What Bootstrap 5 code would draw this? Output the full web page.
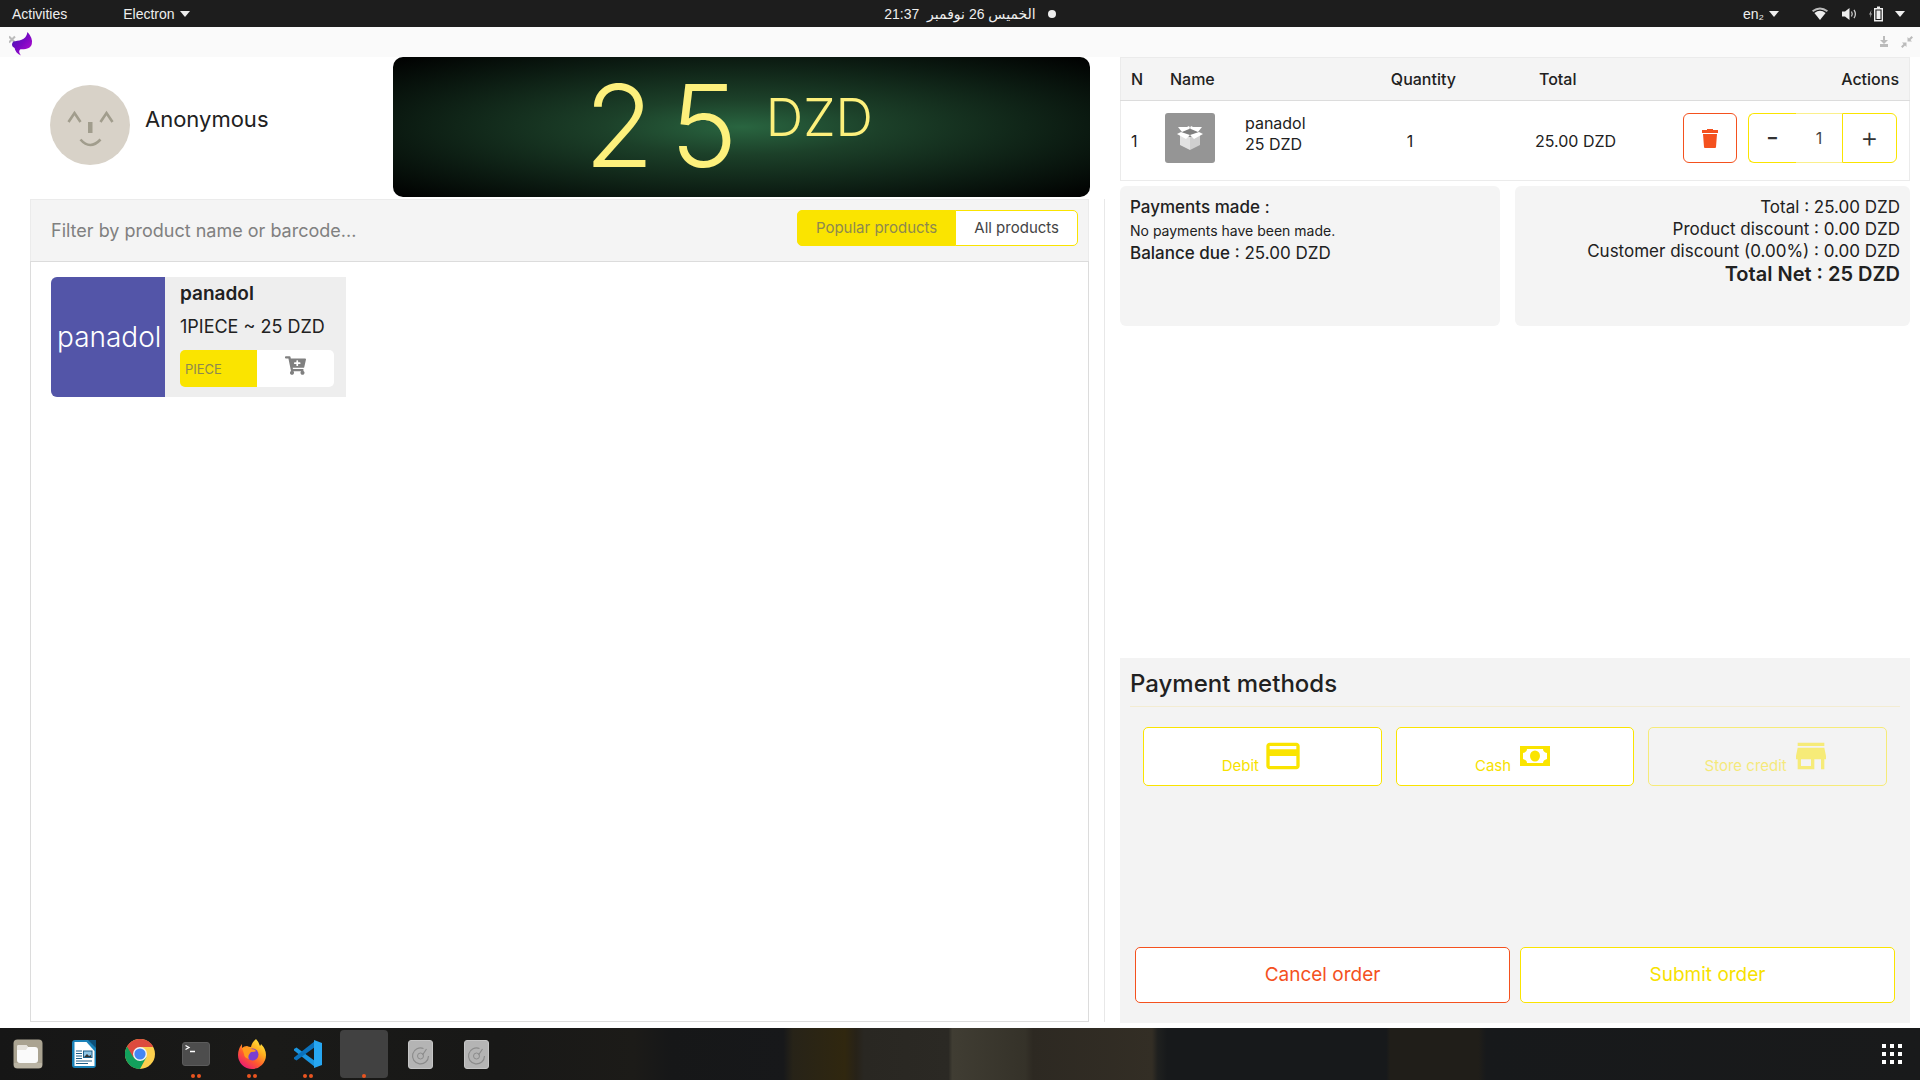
<!DOCTYPE html>
<html lang="en">
<head>
<meta charset="utf-8">
<meta name="viewport" content="width=device-width, initial-scale=1">
<title>Point of sale</title>
<link href="https://cdn.jsdelivr.net/npm/bootstrap@5.3.0/dist/css/bootstrap.min.css" rel="stylesheet">
<style>
:root{--yel:#fae400;--org:#f4511e;--ink:#212121;--panel:#f4f4f4}
body{font-family:Inter,"Open Sans",sans-serif;font-size:17px;color:var(--ink);line-height:22px;background:#fff}
svg{display:block;flex:none}
.shell{min-height:100vh}
/* desktop bars */
.sysbar{height:27px;background:#1d1d1d;color:#eee;font:14px/20px "Liberation Sans","DejaVu Sans",sans-serif;padding:0 14px 0 12px}
.sysbar button,.dock button{background:none;border:0;padding:0;color:inherit;font:inherit}
.sysbar .side{flex:1 1 0}
.sysbar .sysmenu{gap:10px}
.sysbar .clock{padding-left:22px;gap:12px}
.statusdot{width:8px;height:8px;border-radius:50%;background:#eee}
.titlebar{height:30px;background:#fafafa;padding:0 7px 0 9px}
.titlebar button{background:none;border:0;padding:0}
.titlebar .logo{padding-top:3px}
.wincontrols{gap:12px}
/* product side */
.leftcol{padding-left:30px}
.customer{flex:0 0 363px;padding:28px 20px}
.custname{font-size:22px;line-height:24px;padding-top:22px;margin-left:15px}
.screen{height:140px;border-radius:10px;margin-right:30px;padding-right:26px;background:radial-gradient(ellipse farthest-corner at center,#296540 0%,#1c4029 28%,#0b1a11 70%,#000 100%);color:#fdf07c}
.amount{font-size:114px;line-height:138px;letter-spacing:16px;font-weight:300}
.unit{font-size:52px;line-height:60px;padding-top:31px;margin-left:12px;font-weight:300}
.lower{margin:2px 15px 6px 0;padding-right:15px;border-right:1px solid #e8e8e8}
.filterbar{height:62px;background:var(--panel);border:1px solid #ebebeb;border-bottom:0;padding:10px 10px 0 20px}
.filterbar input{border:0;background:none;outline:0;font-size:18px;line-height:22px;height:40px;color:#757575;padding:0}
.filterbar input::placeholder{color:#808080;opacity:1}
.prodbox{border:1px solid #dcdcdc;padding:15px 20px}
.seg .btn{border:1px solid var(--yel);font-size:15px;line-height:20px;padding:7px 18px;border-radius:5px;background:#fff;color:#444;height:36px}
.seg .btn.on{background:var(--yel);color:#8d8850}
.prod{height:120px;background:#eee;width:295px;border-radius:6px 0 0 6px;overflow:hidden}
.tile{width:114px;background:#5355a8;color:#fff;font-size:28px;font-weight:300;padding-left:6px;white-space:nowrap}
.prodinfo{padding:5px 12px 0 15px}
.prodinfo h2{font-size:19px;line-height:24px;font-weight:600;margin:0 0 8px}
.prodinfo p{font-size:18px;line-height:26px;margin:0 0 10px}
.unitsel{appearance:none;border:0;background:var(--yel);color:#8d8850;font-size:13px;padding:0 5px;width:77px;height:37px;border-radius:5px 0 0 5px}
.addbtn{border:0;background:#fff;height:37px;width:77px;border-radius:0 5px 5px 0;padding:0 0 6px}
/* order side */
.rightcol{padding-right:10px;padding-bottom:5px}
.lines{table-layout:fixed;width:100%;border:1px solid #ebebeb;font-size:16px;line-height:22px}
.lines th{height:43px;background:var(--panel);font-weight:500;border-bottom:1px solid #dcdcdc;padding:0 10px;vertical-align:middle}
.lines td{height:80px;padding:0 10px;vertical-align:middle}
.lines .topcell{vertical-align:top;padding:12px 12px 0 5px}
.lines .qtycell{padding-left:26px}
.lines .totcell{padding-left:20px}
.linename{margin-left:30px;line-height:21px}
.linebtns{gap:11px}
.thumb{width:50px;height:50px;border-radius:3px;background:#959595}
.squarebtn{width:54px;height:50px;border:1px solid var(--org);border-radius:6px;background:#fff}
.stepper{height:50px;width:149px}
.stepper button{border:1px solid var(--yel);background:#fff;width:55px;font-size:28px;color:#333;padding:0 0 2px;font-weight:300}
.stepper button:first-child{border-right:0;border-radius:6px 0 0 6px;width:48px;font-weight:400}
.stepper button:last-child{border-radius:0 6px 6px 0}
.stepper input{width:46px;border:1px solid #fbf08a;border-width:1px 0;text-align:center;font-size:16px;padding:0;outline:0;color:#444}
.sums{gap:15px;margin-top:5px}
.sumcard{background:var(--panel);border-radius:6px;height:140px;padding:10px;flex:49 1 0}
.sumcard.wide{flex-grow:51}
.sumcard p{margin:0}
.sumcard .fineprint{font-size:14px;padding-top:2px}
.b5{font-weight:500}
.net{font-size:20px;font-weight:600;line-height:24px}
.paybox{background:#f3f3f3;height:365px;padding:10px 10px 20px}
.paybox h2{font-size:24px;line-height:32px;font-weight:500;margin:0 0 6px}
.rule{border-top:1px solid #f3ecd2;margin:0 0 20px}
.payrow{gap:14px;padding:0 13px}
.paybtn{height:59px;flex:1 1 0;background:#fff;border:1px solid var(--yel);border-radius:5px;color:#f7e100;font-size:15px;line-height:20px;padding:0 0 9px}
.paybtn:disabled{opacity:.5;background:none}
.endrow{gap:10px;padding:0 5px}
.bigbtn{height:56px;background:#fff;border:1px solid var(--yel);border-radius:5px;color:#f7e100;font-size:19px}
.bigbtn.stop{border-color:var(--org);color:var(--org)}
.dock{height:52px;padding:0 18px 0 4px;background:linear-gradient(90deg,#161616 0%,#1a1a18 14%,#181817 26%,#1c1b18 33%,#161718 35%,#17181a 40.8%,#272318 41.3%,#30270f 44%,#272218 44.6%,#292722 45%,#2b2924 49.4%,#403d33 49.6%,#353229 53.4%,#2d2922 53.8%,#332e25 60%,#1f201f 60.3%,#17191b 60.8%,#17191b 72.2%,#201e19 72.4%,#201e19 77%,#17191b 77.4%,#191a1b 100%)}
.apps{gap:8px}
.dock .app{width:48px;height:48px;border-radius:4px;position:relative}
.dock .app.on{background:#414141}
.running{position:absolute;bottom:0;left:0;right:0;gap:2px}
.running i{width:4px;height:4px;border-radius:50%;background:#e95420}
</style>
</head>
<body>
<div class="shell d-flex flex-column">
<header class="sysbar d-flex align-items-center">
  <div class="side d-flex align-items-center">
    <button type="button">Activities</button>
    <button type="button" class="d-flex align-items-center gap-1 ms-5 ps-2">Electron <svg width="12" height="6" viewBox="0 0 12 6"><path d="M1 0h10L6 6z" fill="#eee"/></svg></button>
  </div>
  <button type="button" class="clock d-flex align-items-center"><span dir="rtl">الخميس 26 نوفمبر&nbsp; 21:37</span><span class="statusdot"></span></button>
  <div class="side d-flex align-items-center justify-content-end">
    <button type="button" class="d-flex align-items-center gap-1 me-4">en₂ <svg width="12" height="6" viewBox="0 0 12 6"><path d="M1 0h10L6 6z" fill="#eee"/></svg></button>
    <button type="button" class="sysmenu d-flex align-items-center" aria-label="System menu">
      <svg class="ms-2" width="16" height="14" viewBox="0 0 16 14"><path d="M0 3.6Q8-2.6 16 3.6L14.800 5Q8 0 1.200 5z" fill="#bbb"/><path d="M2.400 6Q8 1.500 13.600 6L8 13z" fill="#eee"/></svg>
      <svg class="ms-1" width="16" height="14" viewBox="0 0 16 14"><path d="M0 4.500h3L7.500 1v12L3 9.500H0z" fill="#eee"/><path d="M9.500 4.500q1.500 2.500 0 5M12 2.800q2.800 4.200 0 8.400" fill="none" stroke="#ccc" stroke-width="1.300"/></svg>
      <svg width="16" height="16" viewBox="0 0 16 16"><path d="M3.500 4L1 8.500h1.500L2 12l2-4.500H2.800z" fill="#aaa"/><path d="M6.700 2.700h7.600v12H6.700z" fill="none" stroke="#eee" stroke-width="1.400"/><path d="M9 .5h3v2H9zM8.500 4.500h4v8.500h-4z" fill="#eee"/></svg>
      <svg width="12" height="6" viewBox="0 0 12 6"><path d="M1 0h10L6 6z" fill="#eee"/></svg>
    </button>
  </div>
</header>
<div class="titlebar d-flex align-items-center justify-content-between">
  <button type="button" class="logo" aria-label="Close"><svg width="24" height="24" viewBox="0 0 24 24"><defs><linearGradient id="lg" x1="0" y1="0" x2="1" y2="1"><stop offset="0" stop-color="#3a1fb0"/><stop offset=".5" stop-color="#7a08c4"/><stop offset="1" stop-color="#c010d0"/></linearGradient></defs><path d="M0 4.500l6 6M6 4.500l-6 6" stroke="#bbb" stroke-width="2"/><path d="M18.500 0C22 4 23.800 8 22.800 12C22 15.800 18 17.600 11.500 17.300C9.500 18.500 10 21 12 23.500C8 22 6 18.500 5.600 16C2.500 14.500 2.300 11.500 4.500 9.500C9 8.500 17 9 18.500 0z" fill="url(#lg)"/></svg></button>
  <div class="wincontrols d-flex align-items-center">
    <button type="button" aria-label="Minimise"><svg width="10" height="12" viewBox="0 0 10 12"><path d="M4 0h2v4h3L5 8 1 4h3zM1 8h8v3H1z" fill="#bbb"/></svg></button>
    <button type="button" aria-label="Restore"><svg width="12" height="12" viewBox="0 0 12 12"><path d="M6.500 5.500V1l1.500 1.500L10.500 0 12 1.500 9.500 4 11 5.500zM5.500 6.500V11L4 9.500 1.500 12 0 10.500 2.500 8 1 6.500z" fill="#bbb"/></svg></button>
  </div>
</div>
<main class="row g-0 flex-grow-1">
  <section class="col-7 leftcol d-flex flex-column">
    <div class="d-flex">
      <div class="customer d-flex">
        <svg width="80" height="80" viewBox="0 0 80 80"><circle cx="40" cy="40" r="40" fill="#d8d2c8"/><path d="M18.500 37L24.500 28 30.500 37M50.500 37L56.500 28 62.500 37M30.500 54.500Q40 65.500 50.500 54.500" fill="none" stroke="#a19d8d" stroke-width="2.600"/><path d="M38 37h4.500v11H38z" fill="#a19d8d"/></svg>
        <div class="custname">Anonymous</div>
      </div>
      <div class="screen flex-grow-1 d-flex justify-content-center"><span class="amount">25</span><span class="unit">DZD</span></div>
    </div>
    <div class="lower flex-grow-1 d-flex flex-column">
      <div class="filterbar d-flex align-items-start justify-content-between">
        <input class="flex-grow-1" type="text" aria-label="Filter products" placeholder="Filter by product name or barcode...">
        <div class="seg btn-group"><button type="button" class="btn on">Popular products</button><button type="button" class="btn">All products</button></div>
      </div>
      <div class="prodbox flex-grow-1">
        <article class="prod d-flex">
          <div class="tile d-flex align-items-center">panadol</div>
          <div class="prodinfo flex-grow-1">
            <h2>panadol</h2>
            <p>1PIECE ~ 25 DZD</p>
            <div class="d-flex"><select class="unitsel" aria-label="Unit"><option>PIECE</option></select><button type="button" class="addbtn d-flex align-items-center justify-content-center" aria-label="Add to cart"><svg width="21" height="19" viewBox="0 0 576 512"><path fill="#808080" d="M504.700 320H211.600l6.500 32h268.400c15.400 0 26.800 14.300 23.400 29.300l-5.500 24.300C523 414.600 536 433.800 536 456c0 31-25.100 56-56 56s-56.300-25.500-56-57c.2-15 6.500-29 16.600-39H231.400c10.300 10.200 16.600 24.300 16.600 40 0 31.800-26.500 57.400-58.600 55.900-28.500-1.300-51.800-24.400-53.300-52.900-1.200-22 10.400-41.500 28.100-51.600L93.900 64H24C10.700 64 0 53.300 0 40V24C0 10.700 10.700 0 24 0h102.500c11.400 0 21.200 8 23.500 19.200l9.200 44.800H552c15.400 0 26.800 14.300 23.400 29.300l-47.300 208c-2.500 11-12.200 18.700-23.400 18.700zM408 168h-48v-40c0-8.800-7.200-16-16-16h-16c-8.800 0-16 7.200-16 16v40h-48c-8.800 0-16 7.200-16 16v16c0 8.800 7.200 16 16 16h48v40c0 8.800 7.200 16 16 16h16c8.800 0 16-7.200 16-16v-40h48c8.800 0 16-7.200 16-16v-16c0-8.800-7.200-16-16-16z"/></svg></button></div>
          </div>
        </article>
      </div>
    </div>
  </section>
  <section class="col-5 rightcol d-flex flex-column">
    <table class="lines">
      <colgroup><col style="width:5%"><col style="width:28%"><col style="width:17%"><col style="width:17%"><col style="width:33%"></colgroup>
      <thead><tr><th>N</th><th>Name</th><th>Quantity</th><th class="ps-4">Total</th><th class="text-end">Actions</th></tr></thead>
      <tbody><tr><td>1</td>
        <td class="topcell"><div class="d-flex"><div class="thumb d-flex align-items-center justify-content-center flex-shrink-0"><svg width="26" height="24" viewBox="0 0 26 24"><path d="M3 8l10 3v13L3 19z" fill="#e2e2e2"/><path d="M23 8l-10 3v13l10-5z" fill="#cfcfcf"/><path d="M3 6l10-3 10 3-10 5z" fill="#7f7f7f"/><path d="M1 1h9l2-1 1 2-1 1-7 3zM25 1h-9l-2-1-1 2 1 1 7 3zM0 8l4-2 9 3-4 4zM26 8l-4-2-9 3 4 4z" fill="#fff"/></svg></div><div class="linename">panadol<br>25 DZD</div></div></td>
        <td class="qtycell">1</td><td class="totcell">25.00&nbsp;DZD</td>
        <td class="topcell"><div class="linebtns d-flex justify-content-end"><button type="button" class="squarebtn d-flex align-items-center justify-content-center" aria-label="Remove line"><svg width="16" height="19" viewBox="0 0 16 19"><path d="M5 0h6v1h5v3H0V1h5zM1 5h14l-1 13q0 1-1 1H3q-1 0-1-1z" fill="#f4511e"/></svg></button>
        <div class="stepper d-flex"><button type="button">-</button><input type="text" value="1" aria-label="Quantity"><button type="button">+</button></div></div></td></tr></tbody>
    </table>
    <div class="sums d-flex">
      <div class="sumcard"><p><span class="b5">Payments made</span> :</p><p class="fineprint">No payments have been made.</p><p><span class="b5">Balance due</span> : 25.00 DZD</p></div>
      <div class="sumcard wide text-end"><p>Total : 25.00 DZD</p><p>Product discount : 0.00 DZD</p><p>Customer discount (0.00%) : 0.00 DZD</p><p class="net">Total Net : 25 DZD</p></div>
    </div>
    <div class="paybox mt-auto d-flex flex-column">
      <h2>Payment methods</h2>
      <div class="rule"></div>
      <div class="payrow d-flex">
        <button type="button" class="paybtn d-flex align-items-end justify-content-center">Debit<svg class="ms-1" width="40" height="40" viewBox="0 0 24 24"><path fill="#fae400" d="M20 4H4c-1.110 0-2 .89-2 2v12c0 1.110.89 2 2 2h16c1.110 0 2-.89 2-2V6c0-1.110-.89-2-2-2zm0 14H4v-6h16v6zm0-10H4V6h16v2z"/></svg></button>
        <button type="button" class="paybtn d-flex align-items-end justify-content-center">Cash<svg class="ms-1" width="40" height="40" viewBox="0 0 40 40"><path fill="#fae400" fill-rule="evenodd" d="M5 10h30v20H5zM12 13q0 3-4 4v6q4 1 4 4h16q0-3 4-4v-6q-4-1-4-4z"/><ellipse cx="20" cy="20" rx="5" ry="5.500" fill="#fae400"/></svg></button>
        <button type="button" class="paybtn d-flex align-items-end justify-content-center" disabled>Store credit<svg class="ms-1" width="40" height="40" viewBox="0 0 24 24"><path fill="#fae400" d="M20 4H4v2h16V4zm1 10v-2l-1-5H4l-1 5v2h1v6h10v-6h4v6h2v-6h1zm-9 4H6v-4h6v4z"/></svg></button>
      </div>
      <div class="endrow d-flex mt-auto"><button type="button" class="bigbtn stop w-50">Cancel order</button><button type="button" class="bigbtn w-50">Submit order</button></div>
    </div>
  </section>
</main>
<footer class="dock d-flex align-items-center justify-content-between">
  <nav class="apps d-flex" aria-label="Favourites">
    <button type="button" class="app d-flex align-items-center justify-content-center" aria-label="Files"><svg width="30" height="30" viewBox="0 0 30 30"><rect x=".5" y=".5" width="29" height="29" rx="4" fill="#aaa391"/><path d="M1 24h28v2q0 3-3 3H4q-3 0-3-3z" fill="#bab4a4"/><path d="M4 9V8q0-2 2-2h7l2 2h7q3 0 3 3v10q0 3-3 3H7q-3 0-3-3z" fill="#fafafa"/><path d="M4 11V8q0-2 2-2h7q1 0 2 2l-2 3z" fill="#e6e3dc"/></svg></button>
    <button type="button" class="app d-flex align-items-center justify-content-center" aria-label="Writer"><svg width="26" height="30" viewBox="0 0 26 30"><rect x="1" y="1" width="24" height="28" rx="3" fill="#1b82b8"/><path d="M3.500 3h12l8 9v15h-20z" fill="#fff"/><path d="M17 1h8v8z" fill="#0d4f78"/><path d="M5 12h6M5 14.500h6M5 17h6M5 19.500h6M5 22h16M5 24.500h12" stroke="#1f5f88" stroke-width="1.200"/><rect x="12.500" y="12" width="8.500" height="6.500" fill="#8fc4e4" stroke="#1f5f88"/><path d="M13 18l3-3 2 2 2-1v2z" fill="#333"/></svg></button>
    <button type="button" class="app d-flex align-items-center justify-content-center" aria-label="Chrome"><svg width="30" height="30" viewBox="0 0 30 30"><circle cx="15" cy="15" r="15" fill="#fdd04e"/><path d="M15 15L2 7.500A15 15 0 0 0 15 30L21.500 18z" fill="#12a05c"/><path d="M15 8h13.300A15 15 0 0 0 2 7.500L8.500 18.500z" fill="#dd4b3e"/><circle cx="15" cy="15" r="7" fill="#f4f4f4"/><circle cx="15" cy="15" r="5.600" fill="#4486f4"/></svg></button>
    <button type="button" class="app d-flex align-items-center justify-content-center" aria-label="Terminal"><svg width="28" height="24" viewBox="0 0 28 24"><rect x=".5" y=".5" width="27" height="23" rx="2.500" fill="#4d4d4d" stroke="#5c5c5c"/><path d="M3.500 3.500l3.500 2-3.500 2M8 9.500h5" fill="none" stroke="#fff" stroke-width="1.300"/></svg><span class="running d-flex justify-content-center"><i></i><i></i></span></button>
    <button type="button" class="app d-flex align-items-center justify-content-center" aria-label="Firefox"><svg width="28" height="30" viewBox="0 0 28 30"><defs><linearGradient id="fx" x1=".9" y1="0" x2=".2" y2="1"><stop offset="0" stop-color="#fff24a"/><stop offset=".35" stop-color="#ffb01f"/><stop offset=".65" stop-color="#ff5a2e"/><stop offset="1" stop-color="#e8137c"/></linearGradient></defs><path d="M18 0q3 3 4 7 1-1 1-2 5 5 5 11A14 14 0 0 1 0 16Q0 10 4 5v4q2-2 5-2 2 1 4 1 1-5 5-8z" fill="url(#fx)"/><circle cx="14.500" cy="15.500" r="6" fill="#7a3fd2"/><path d="M4 9q5-2 9 1 4 0 5 2-1 1-5 1-4 4-2 7-5-1-5-5z" fill="#ff9a1c"/></svg><span class="running d-flex justify-content-center"><i></i><i></i></span></button>
    <button type="button" class="app d-flex align-items-center justify-content-center" aria-label="Code"><svg width="28" height="28" viewBox="0 0 28 28"><path d="M0 9l2.500-1.500L21 21v6L0 10.500z" fill="#1a95e0"/><path d="M0 19l2.500 1.500L21 7V1L0 17.500z" fill="#0a72bd"/><path d="M20 0l8 3v22l-8 3z" fill="#27a7f2"/></svg><span class="running d-flex justify-content-center"><i></i><i></i></span></button>
    <button type="button" class="app on" aria-label="Electron"><span class="running d-flex justify-content-center"><i></i></span></button>
    <button type="button" class="app d-flex align-items-center justify-content-center" aria-label="Disk 1"><svg width="25" height="29" viewBox="0 0 25 29"><rect x=".5" y=".5" width="24" height="28" rx="2.500" fill="#b4b4b4" stroke="#c6c6c6"/><path d="M15.500 8.500a8 8 0 1 0 5 7.500M18.500 9l-4 6" fill="none" stroke="#8c8c8c" stroke-width="1.200"/><circle cx="12.500" cy="16" r="3" fill="none" stroke="#8c8c8c"/></svg></button>
    <button type="button" class="app d-flex align-items-center justify-content-center" aria-label="Disk 2"><svg width="25" height="29" viewBox="0 0 25 29"><rect x=".5" y=".5" width="24" height="28" rx="2.500" fill="#b4b4b4" stroke="#c6c6c6"/><path d="M15.500 8.500a8 8 0 1 0 5 7.500M18.500 9l-4 6" fill="none" stroke="#8c8c8c" stroke-width="1.200"/><circle cx="12.500" cy="16" r="3" fill="none" stroke="#8c8c8c"/></svg></button>
  </nav>
  <button type="button" aria-label="Show applications"><svg width="20" height="20" viewBox="0 0 20 20"><path d="M0 0h4v4H0zM8 0h4v4H8zM16 0h4v4h-4zM0 8h4v4H0zM8 8h4v4H8zM16 8h4v4h-4zM0 16h4v4H0zM8 16h4v4H8zM16 16h4v4h-4z" fill="#fff"/></svg></button>
</footer>
</div>
<script src="https://cdn.jsdelivr.net/npm/bootstrap@5.3.0/dist/js/bootstrap.bundle.min.js"></script>
</body>
</html>
